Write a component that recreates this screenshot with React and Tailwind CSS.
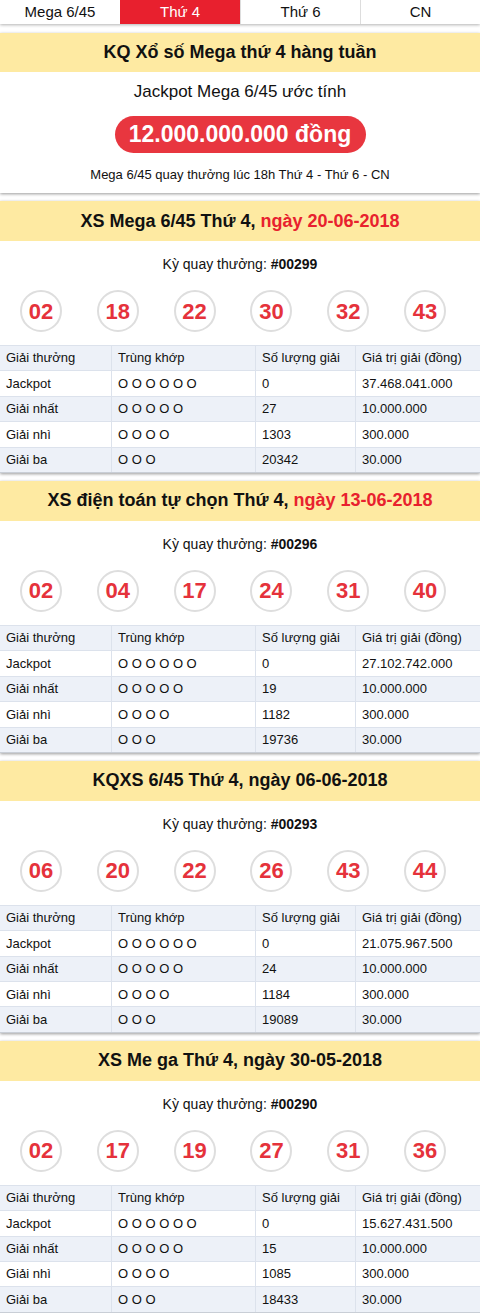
import React from "react";

const draws = [
  {
    title: "XS Mega 6/45 Thứ 4, ",
    date: "ngày 20-06-2018",
    red: true,
    ky: "#00299",
    balls: ["02", "18", "22", "30", "32", "43"],
    rows: [
      ["Jackpot", "O O O O O O", "0", "37.468.041.000"],
      ["Giải nhất", "O O O O O", "27", "10.000.000"],
      ["Giải nhì", "O O O O", "1303", "300.000"],
      ["Giải ba", "O O O", "20342", "30.000"],
    ],
  },
  {
    title: "XS điện toán tự chọn Thứ 4, ",
    date: "ngày 13-06-2018",
    red: true,
    ky: "#00296",
    balls: ["02", "04", "17", "24", "31", "40"],
    rows: [
      ["Jackpot", "O O O O O O", "0", "27.102.742.000"],
      ["Giải nhất", "O O O O O", "19", "10.000.000"],
      ["Giải nhì", "O O O O", "1182", "300.000"],
      ["Giải ba", "O O O", "19736", "30.000"],
    ],
  },
  {
    title: "KQXS 6/45 Thứ 4, ",
    date: "ngày 06-06-2018",
    red: false,
    ky: "#00293",
    balls: ["06", "20", "22", "26", "43", "44"],
    rows: [
      ["Jackpot", "O O O O O O", "0", "21.075.967.500"],
      ["Giải nhất", "O O O O O", "24", "10.000.000"],
      ["Giải nhì", "O O O O", "1184", "300.000"],
      ["Giải ba", "O O O", "19089", "30.000"],
    ],
  },
  {
    title: "XS Me ga Thứ 4, ",
    date: "ngày 30-05-2018",
    red: false,
    ky: "#00290",
    balls: ["02", "17", "19", "27", "31", "36"],
    rows: [
      ["Jackpot", "O O O O O O", "0", "15.627.431.500"],
      ["Giải nhất", "O O O O O", "15", "10.000.000"],
      ["Giải nhì", "O O O O", "1085", "300.000"],
      ["Giải ba", "O O O", "18433", "30.000"],
    ],
  },
];

const tabs = ["Mega 6/45", "Thứ 4", "Thứ 6", "CN"];

function Row({ cells, head, stripe }) {
  return (
    <div
      className={`grid grid-cols-[111px_144px_100px_1fr] h-[25.4px] border-t border-[#dce2ec] text-[13px] text-[#111] ${
        head || stripe ? "bg-[#edf1f8]" : "bg-white"
      }`}
    >
      {cells.map((c, i) => (
        <div
          key={i}
          className={`flex items-center pl-[6px] ${i > 0 ? "border-l border-[#dce2ec]" : ""}`}
        >
          {c}
        </div>
      ))}
    </div>
  );
}

function DrawCard({ d }) {
  return (
    <div className="mt-[8px] bg-white shadow-[0_1px_3px_rgba(0,0,0,0.4)]">
      <div className="h-[40px] bg-[#feeaa2] flex items-center justify-center text-[18px] font-bold text-[#111]">
        <span>{d.title}</span>
        <span className={d.red ? "text-[#e8212e] ml-[5px]" : "ml-[5px]"}>{d.date}</span>
      </div>
      <div className="pt-[13px] h-[20px] box-content text-center text-[14px] leading-[20px] text-[#111]">
        Kỳ quay thưởng: <b>{d.ky}</b>
      </div>
      <div className="mt-[16px] mb-[13px] flex pl-[20px] gap-[34.8px]">
        {d.balls.map((b, i) => (
          <div
            key={i}
            className="w-[42px] h-[42px] rounded-full border-2 border-[#dedede] flex items-center justify-center text-[22px] font-bold text-[#e5323b]"
          >
            {b}
          </div>
        ))}
      </div>
      <div className="border-b border-[#c9ced6]">
        <Row head cells={["Giải thưởng", "Trùng khớp", "Số lượng giải", "Giá trị giải (đồng)"]} />
        {d.rows.map((r, i) => (
          <Row key={i} cells={r} stripe={i % 2 === 1} />
        ))}
      </div>
    </div>
  );
}

export default function App() {
  return (
    <div className="w-[480px] min-h-[1313px] bg-white font-['Liberation_Sans',Arial,sans-serif] overflow-hidden">
      <div className="grid grid-cols-4 h-[24px] shadow-[0_1px_3px_rgba(0,0,0,0.3)] text-[15px]">
        {tabs.map((t, i) => (
          <div
            key={i}
            className={`flex items-center justify-center ${
              i === 1 ? "bg-[#e8202e] text-white" : "bg-white text-[#111]"
            } ${i > 1 ? "border-l border-[#ddd]" : ""}`}
          >
            {t}
          </div>
        ))}
      </div>

      <div className="mt-[9px] bg-white shadow-[0_1px_3px_rgba(0,0,0,0.4)] pb-[9px]">
        <div className="h-[39px] bg-[#feeaa2] flex items-center justify-center text-[18px] font-bold text-[#111]">
          KQ Xổ số Mega thứ 4 hàng tuần
        </div>
        <div className="pt-[10px] text-center text-[17px] leading-[20px] text-[#111]">
          Jackpot Mega 6/45 ước tính
        </div>
        <div className="mt-[14px] flex justify-center">
          <div className="h-[37px] w-[251px] rounded-full bg-[#e8363f] flex items-center justify-center text-white text-[23px] font-bold whitespace-nowrap">
            12.000.000.000 đồng
          </div>
        </div>
        <div className="mt-[13px] text-center text-[13px] leading-[18px] text-[#111]">
          Mega 6/45 quay thưởng lúc 18h Thứ 4 - Thứ 6 - CN
        </div>
      </div>

      {draws.map((d, i) => (
        <DrawCard key={i} d={d} />
      ))}
    </div>
  );
}
